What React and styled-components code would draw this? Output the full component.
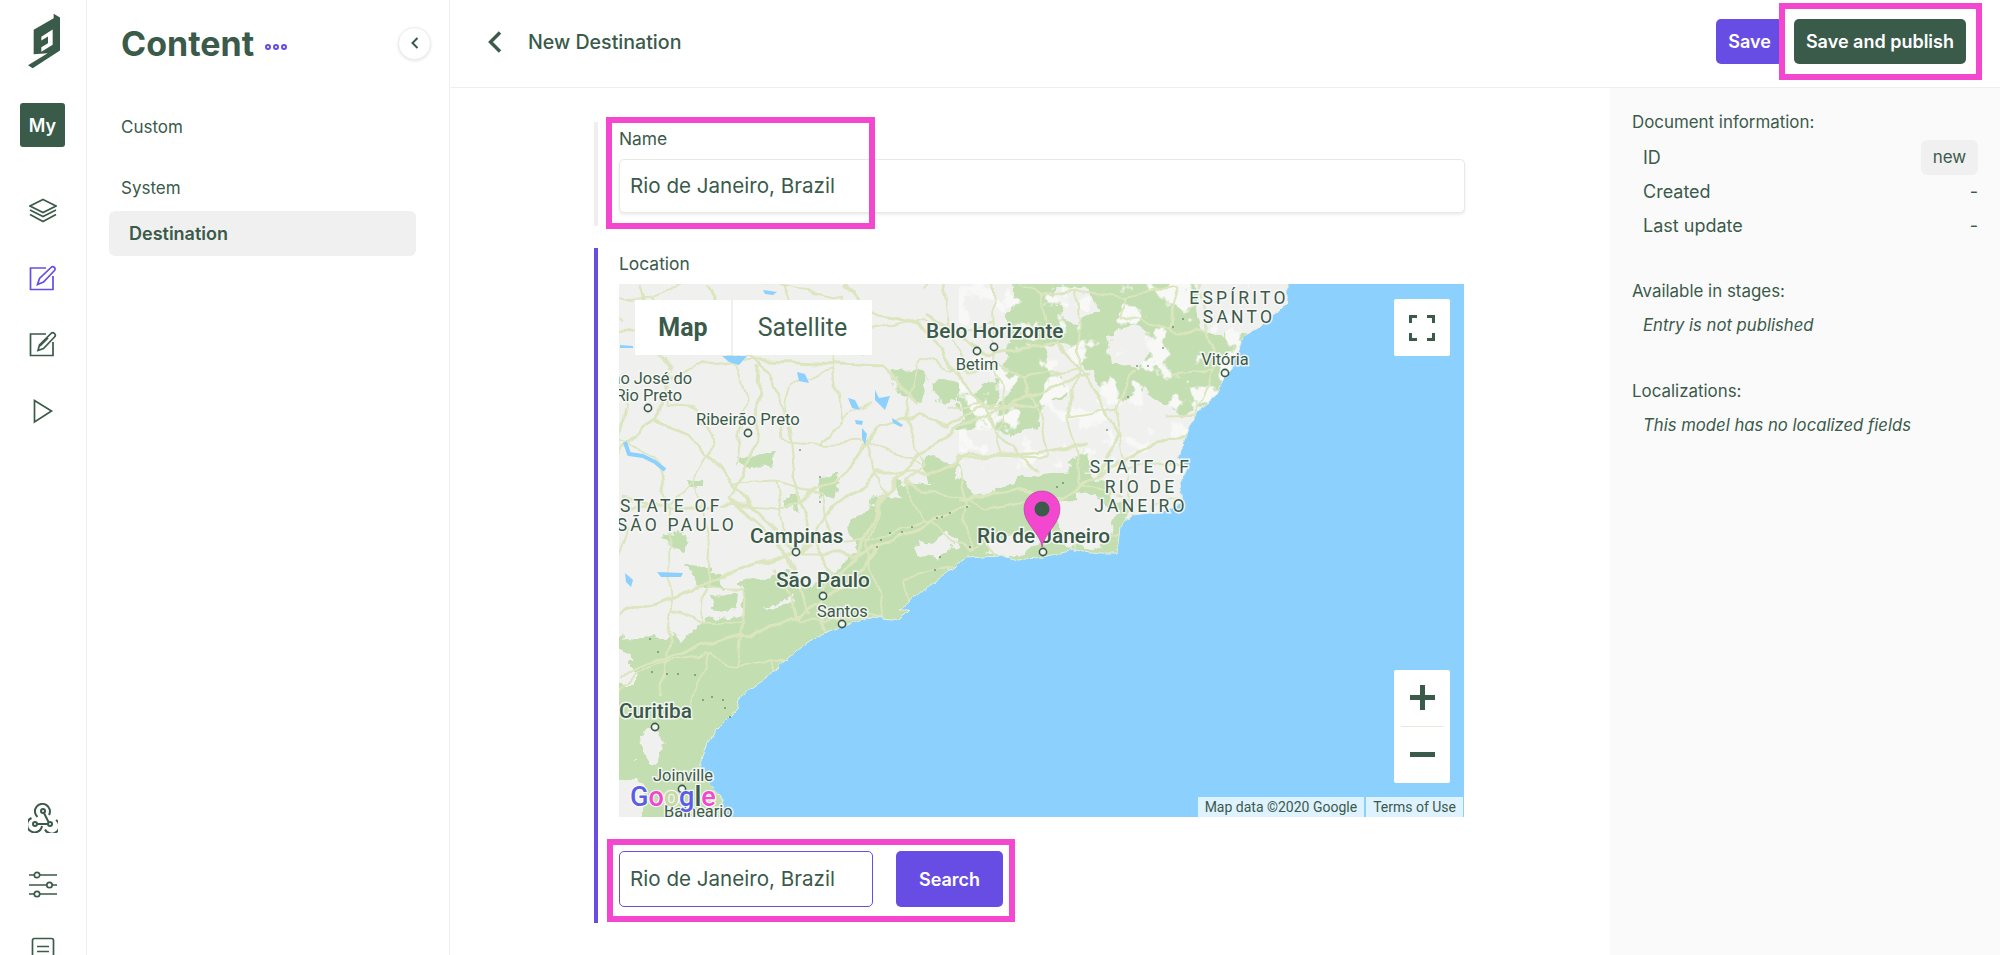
import React from "react";
import styled, { createGlobalStyle } from "styled-components";

const GREEN = "#3a5a4a";
const PURPLE = "#674de3";
const PINK = "#f347d0";
const LAND = "#f0f0ee";
const FOREST = "#c3deb0";
const SEA = "#8cd0fe";

const water = "668,-50 668,19 658,29 638,44 624,53 619,69 611,86 601,103 594,116 578,128 571,143 564,159 559,173 569,183 561,199 564,219 541,228 514,231 501,243 498,269 481,269 454,266 424,273 398,276 381,271 348,273 331,286 304,306 281,326 291,326 281,336 254,333 234,339 204,349 178,366 148,393 121,413 118,426 98,446 88,459 81,479 88,496 104,516 109,600 900,600 900,-50";

// forest areas, in map pixels
const forests = [
    "-40,359 14,353 38,356 68,359 84,339 114,336 138,329 168,323 188,306 224,286 264,246 304,229 338,219 371,213 404,193 451,186 464,169 481,203 508,229 500,275 300,345 180,400 110,600 -40,600",
    "564,-30 581,49 624,53 601,103 578,123 561,129 528,103 508,116 484,106 464,76 441,56 421,63 448,106 424,119 408,146 388,146 381,119 404,99 374,99 344,116 341,146 364,143 380,105 394,60 394,-30",
    "230,232 300,205 345,195 360,215 300,240 240,270",
    "120,300 170,290 190,305 130,330",
    "71,195 84,197 82,203 72,202",
    "121,173 156,171 150,181 128,180",
    "201,193 218,196 214,213 203,210",
    "168,216 178,216 176,223 168,222",
    "46,249 68,256 66,263 50,258",
    "68,283 101,288 100,303 76,300",
    "276,199 304,202 300,219 280,216",
    "304,176 338,180 334,199 310,196",
    "318,96 341,100 338,119 320,116",
    "278,86 304,92 300,116 282,110",
    "364,136 391,138 388,149 368,148",
    "408,136 421,138 419,146 410,145",
    "91,313 114,315 112,326 94,324"
];

// open ground cut back out of the forest
const clearings = [
    "440,10 470,6 478,24 455,40 444,30",
    "490,50 520,44 540,60 515,84 495,76",
    "-20,372 12,372 12,396 -20,396",
    "22,448 36,440 46,460 34,478 24,474",
    "-20,500 16,492 30,508 20,560 -20,560",
    "370,260 400,250 420,258 398,270 372,272",
    "436,220 474,214 496,232 480,262 446,256",
    "300,262 326,250 340,256 318,276"
];

const roads = [
    "20,0 34,50 52,84 36,130 0,170",
    "90,0 110,48 150,90 172,150 178,215 215,300",
    "225,0 250,30 300,40 330,80 360,120 380,150 420,190",
    "0,48 60,52 120,76 175,78 262,82 300,120",
    "140,84 135,170 110,215 170,270 190,330",
    "36,130 90,170 130,222 180,270 210,230 260,190 310,190 350,170 410,170 470,160",
    "0,215 60,225 108,222 160,225 225,190 260,140 300,130 330,145 360,125 420,120",
    "210,300 240,270 262,215 300,170 350,140 410,110 470,90",
    "0,330 60,310 110,290 170,270 240,270 290,250 350,220",
    "305,30 370,70 440,60 470,100 500,150 480,190 440,215 400,205 340,215",
    "480,190 520,165 570,150 590,120",
    "0,390 60,370 130,350 180,330 230,300 262,260"
];

// thin back roads on a jittered grid, so the inland does not stay empty
function backRoads() {
    let seed = 41;
    const rnd = () => {
        seed = (seed * 1103515245 + 12345) % 2147483648;
        return seed / 2147483648;
    };
    const step = 42;
    const points = [];
    for (let r = 0; r < 11; r++) {
        points.push([]);
        for (let c = 0; c < 15; c++) {
            points[r].push([c * step + rnd() * 30 - 15, r * step + rnd() * 30 - 15]);
        }
    }
    const lines = [];
    for (let r = 0; r < 11; r++) {
        for (let c = 0; c < 15; c++) {
            const p = points[r][c];
            if (c < 14 && rnd() < 0.62) lines.push([p, points[r][c + 1]]);
            if (r < 10 && rnd() < 0.62) lines.push([p, points[r + 1][c]]);
        }
    }
    return lines;
}

const lanes = backRoads();

const lakes = [
    "178,88 186,90 190,99 180,97",
    "229,114 236,116 241,126 233,124",
    "256,106 260,114 271,112 266,126 256,116",
    "236,136 244,137 243,141 237,140",
    "243,144 248,150 246,161 243,154",
    "273,134 284,141 282,143 274,139",
    "38,288 64,289 62,293 42,293",
    "6,289 14,296 12,303 7,298",
    "144,6 158,8 154,11 146,10",
    "103,72 128,72 120,81 110,78",
    "1,61 14,62 14,64 1,64"
];

const longLake = "6,158 10,170 24,172 36,178 46,186";

const borderDots = [
    [318, 234], [323, 233], [331, 229], [348, 223], [258, 263], [262, 256], [271, 249], [283, 248],
    [293, 243], [316, 286], [321, 273], [351, 263], [438, 203], [444, 199], [488, 146], [509, 113],
    [518, 82], [529, 82], [544, 64], [554, 43], [564, 35], [201, 193], [201, 218], [181, 166],
    [31, 355], [39, 368], [33, 388], [48, 390], [59, 390], [76, 391], [84, 416], [93, 413],
    [104, 416], [106, 424], [111, 433]
];

const rings = [[375, 63], [358, 67], [29, 124], [129, 149], [177, 268], [204, 312], [223, 340], [606, 89], [36, 443], [63, 505]];

export default function App() {
    return (
        <Page>
            <GlobalStyle />
            <Rail>
                <Logo viewBox="36 27 96 163">
                    <path fillRule="evenodd" d="M113 27 132 38V137L50 190 36 181 95 145 53 148V75L113 40ZM76 96 110 74V120L76 141V127L96 115V95L76 107Z" fill={GREEN} />
                </Logo>
                <Workspace>My</Workspace>
                <RailIcons>
                    <RailIcon>
                        <IconSvg viewBox="0 0 28 28">
                            <path d="M14 2.5 27 9 14 15.5 1 9Z" />
                            <path d="M1 13 14 19.5 27 13" />
                            <path d="M1 17.5 14 24.5 27 17.5" />
                        </IconSvg>
                    </RailIcon>
                    <RailIcon $active>
                        <IconSvg viewBox="0 0 28 28">
                            <path d="M17 4H1.5V25.5H24V12" />
                            <path d="M8.5 20.5 10.5 14.5 22 3.5A2.2 2.2 0 0 1 25.5 6.5L14.5 18Z" />
                        </IconSvg>
                    </RailIcon>
                    <RailIcon>
                        <IconSvg viewBox="0 0 28 28">
                            <path d="M17 4H1.5V25.5H24V12" />
                            <path d="M9 20.5 10.5 15 22 3.5A2.4 2.4 0 0 1 25.5 7L14.5 18.5Z" />
                            <path d="M11 16 19 8" />
                        </IconSvg>
                    </RailIcon>
                    <RailIcon>
                        <IconSvg viewBox="0 0 28 28">
                            <path d="M5.5 3.5V25L22.5 14Z" />
                        </IconSvg>
                    </RailIcon>
                </RailIcons>
                <RailBottom>
                    <RailIcon>
                        <IconSvg $wide viewBox="0 0 30 30">
                            <path d="M9.5 14A7.5 7.5 0 1 1 21 12" />
                            <path d="M3.5 15A7.5 7.5 0 1 0 14 23" />
                            <path d="M17 26.5A7.5 7.5 0 1 0 28 17" />
                            <circle cx="15" cy="8" r="2" />
                            <circle cx="7" cy="21" r="2" />
                            <circle cx="22" cy="21" r="2" />
                            <path d="M16 10 20.5 19M9 21H20" />
                        </IconSvg>
                    </RailIcon>
                    <RailIcon>
                        <IconSvg viewBox="0 0 28 28">
                            <path d="M0 4H28M0 14H28M0 23H28" />
                            <circle cx="8" cy="4" r="2.7" fill="#fff" />
                            <circle cx="20.5" cy="14" r="2.7" fill="#fff" />
                            <circle cx="8" cy="23" r="2.7" fill="#fff" />
                        </IconSvg>
                    </RailIcon>
                    <RailIcon>
                        <IconSvg viewBox="0 0 28 28">
                            <rect x="3.5" y="1.5" width="21" height="26" rx="2" />
                            <path d="M8 9.5H20M8 14.5H20" />
                        </IconSvg>
                    </RailIcon>
                </RailBottom>
            </Rail>

            <Sidebar>
                <TitleRow>
                    <Title>Content</Title>
                    <MoreDots>
                        <i /><i /><i />
                    </MoreDots>
                    <Collapse>
                        <svg width="12" height="14" viewBox="0 0 12 14">
                            <path d="M8.5 2 3.5 7 8.5 12" fill="none" stroke={GREEN} strokeWidth="2" />
                        </svg>
                    </Collapse>
                </TitleRow>
                <GroupLabel>Custom</GroupLabel>
                <GroupLabel $gap>System</GroupLabel>
                <SideItem>Destination</SideItem>
            </Sidebar>

            <Main>
                <Header>
                    <BackIcon width="16" height="24" viewBox="0 0 16 24">
                        <path d="M13 2.5 3.5 12 13 21.5" fill="none" stroke={GREEN} strokeWidth="3.4" />
                    </BackIcon>
                    <HeaderTitle>New Destination</HeaderTitle>
                    <Button $bg={PURPLE}>Save</Button>
                    <PublishWrap>
                        <PublishMark />
                        <Button $bg={GREEN} $wide>Save and publish</Button>
                    </PublishWrap>
                </Header>
                <Body>
                    <FormArea>
                        <Field>
                            <Mark $left={8} $top={-5} $width={269} $height={112} />
                            <FieldLabel>Name</FieldLabel>
                            <TextInput value="Rio de Janeiro, Brazil" readOnly />
                        </Field>
                        <Field $active>
                            <FieldLabel>Location</FieldLabel>
                            <MapBox>
                                <MapDrawing />
                                <MapTypes>
                                    <MapType $on>Map</MapType>
                                    <MapType>Satellite</MapType>
                                </MapTypes>
                                <FullScreen>
                                    <svg width="26" height="26" viewBox="0 0 26 26">
                                        <path d="M1.5 8V1.5H8M18 1.5H24.5V8M24.5 18V24.5H18M8 24.5H1.5V18" fill="none" stroke={GREEN} strokeWidth="3" />
                                    </svg>
                                </FullScreen>
                                <ZoomBox>
                                    <ZoomPlus />
                                    <ZoomLine />
                                    <ZoomMinus />
                                </ZoomBox>
                                <Attribution>
                                    <AttrCell>Map data ©2020 Google</AttrCell>
                                    <AttrCell>Terms of Use</AttrCell>
                                </Attribution>
                            </MapBox>
                            <SearchRow>
                                <Mark $left={-12} $top={-12} $width={408} $height={83} />
                                <SearchInput value="Rio de Janeiro, Brazil" readOnly />
                                <SearchButton>Search</SearchButton>
                            </SearchRow>
                        </Field>
                    </FormArea>
                    <Details>
                        <DetailsHead>Document information:</DetailsHead>
                        <InfoRows>
                            <InfoRow>ID<Chip>new</Chip></InfoRow>
                            <InfoRow>Created<span>-</span></InfoRow>
                            <InfoRow>Last update<span>-</span></InfoRow>
                        </InfoRows>
                        <DetailsHead $top={39}>Available in stages:</DetailsHead>
                        <DetailsNote>Entry is not published</DetailsNote>
                        <DetailsHead $top={46}>Localizations:</DetailsHead>
                        <DetailsNote>This model has no localized fields</DetailsNote>
                    </Details>
                </Body>
            </Main>
        </Page>
    );
}

function MapDrawing() {
    return (
        <MapSvg viewBox="0 0 845 533">
            <defs>
                <filter id="rough" x="-5%" y="-5%" width="110%" height="110%">
                    <feTurbulence type="fractalNoise" baseFrequency="0.05" numOctaves="4" seed="3" />
                    <feDisplacementMap in="SourceGraphic" scale="22" xChannelSelector="R" yChannelSelector="G" />
                </filter>
                <filter id="wiggle" x="-5%" y="-5%" width="110%" height="110%">
                    <feTurbulence type="fractalNoise" baseFrequency="0.04" numOctaves="2" seed="9" />
                    <feDisplacementMap in="SourceGraphic" scale="14" xChannelSelector="R" yChannelSelector="G" />
                </filter>
                <filter id="coast" x="-5%" y="-5%" width="110%" height="110%">
                    <feTurbulence type="fractalNoise" baseFrequency="0.09" numOctaves="3" seed="5" />
                    <feDisplacementMap in="SourceGraphic" scale="6" xChannelSelector="R" yChannelSelector="G" />
                </filter>
                <filter id="holes" x="0" y="0" width="100%" height="100%">
                    <feTurbulence type="fractalNoise" baseFrequency="0.04" numOctaves="4" seed="12" />
                    <feColorMatrix type="matrix" values="0 0 0 0 0.94  0 0 0 0 0.94  0 0 0 0 0.93  14 0 0 0 -7.9" />
                </filter>
            </defs>
            <rect width="845" height="533" fill={LAND} />
            <g filter="url(#rough)">
                {forests.map((p, i) => <polygon key={i} points={p} fill={FOREST} stroke={FOREST} strokeWidth="4" strokeLinejoin="round" />)}
                {clearings.map((p, i) => <polygon key={i} points={p} fill={LAND} stroke={LAND} strokeWidth="4" strokeLinejoin="round" />)}
            </g>
            <rect x="340" y="0" width="290" height="190" filter="url(#holes)" />
            <g filter="url(#wiggle)" fill="none" stroke="#dbe6bf" strokeLinejoin="round">
                {lanes.map(([a, b], i) => <line key={i} x1={a[0]} y1={a[1]} x2={b[0]} y2={b[1]} strokeWidth="2" />)}
                {roads.map((p, i) => <polyline key={i} points={p} strokeWidth="3" />)}
            </g>
            <g fill={SEA}>
                {lakes.map((p, i) => <polygon key={i} points={p} />)}
            </g>
            <polyline points={longLake} fill="none" stroke={SEA} strokeWidth="4" strokeLinejoin="round" />
            <polygon points={water} filter="url(#coast)" fill={SEA} stroke="#e8efdc" strokeWidth="1" strokeLinejoin="round" />
            {borderDots.map(([x, y], i) => <circle key={i} cx={x} cy={y} r="0.8" fill={GREEN} />)}

            <City x="307" y="54" $size={20.8} $bold>Belo Horizonte</City>
            <City x="358" y="86" $size={16.4} textAnchor="middle">Betim</City>
            <City x="73" y="100" $size={16.4} textAnchor="end">São José do</City>
            <City x="63" y="117" $size={16.4} textAnchor="end">Rio Preto</City>
            <City x="77" y="141" $size={16.6}>Ribeirão Preto</City>
            <Region x="1" y="228">STATE OF</Region>
            <Region x="118" y="247" textAnchor="end">SÃO PAULO</Region>
            <City x="131" y="259" $size={20.8} $bold>Campinas</City>
            <City x="157" y="303" $size={20.8} $bold>São Paulo</City>
            <City x="198" y="333" $size={16.4}>Santos</City>
            <City x="358" y="259" $size={20.8} $bold>Rio de Janeiro</City>
            <Region x="522" y="189" textAnchor="middle">STATE OF</Region>
            <Region x="522" y="209" textAnchor="middle">RIO DE</Region>
            <Region x="522" y="228" textAnchor="middle">JANEIRO</Region>
            <Region x="620" y="20" textAnchor="middle">ESPÍRITO</Region>
            <Region x="620" y="39" textAnchor="middle">SANTO</Region>
            <City x="606" y="81" $size={16.4} textAnchor="middle">Vitória</City>
            <City x="0" y="434" $size={20.8} $bold>Curitiba</City>
            <City x="34" y="497" $size={16.4}>Joinville</City>
            <City x="45" y="533" $size={16.4}>Balneário</City>

            {rings.map(([x, y], i) => <CityRing key={i} cx={x} cy={y} r="3.6" />)}
            <CityRing cx="424" cy="268" r="3.6" />
            <path d="M423 263C422 250 405 240 405 225A18 18 0 0 1 441 225C441 240 425 250 423 263Z" fill={PINK} stroke="#b03a9c" strokeWidth="0.6" />
            <circle cx="423" cy="225" r="7.5" fill={GREEN} />

            <GoogleMark x="11" y="522">
                <tspan fill="#5a5ee6">G</tspan>
                <tspan fill={PINK}>o</tspan>
                <tspan fill="#c8d8a8">o</tspan>
                <tspan fill="#5a5ee6">g</tspan>
                <tspan fill={GREEN}>l</tspan>
                <tspan fill={PINK}>e</tspan>
            </GoogleMark>
        </MapSvg>
    );
}

const GlobalStyle = createGlobalStyle`
    html, body {
        margin: 0;
        background: #fff;
    }

    * {
        box-sizing: border-box;
    }
`

const Page = styled.div`
    display: flex;
    width: 2000px;
    height: 955px;
    overflow: hidden;
    background: #fff;
    color: ${GREEN};
    font-family: Inter, "Liberation Sans", sans-serif;
    font-size: 16px;
`

const Rail = styled.nav`
    flex: 0 0 87px;
    display: flex;
    flex-direction: column;
    align-items: center;
    height: 955px;
    padding-top: 13px;
    border-right: 1px solid #efefef;
`

const Logo = styled.svg`
    flex: none;
    width: 32px;
    height: 56px;
    margin-left: 1px;
`

const Workspace = styled.div`
    flex: none;
    display: flex;
    align-items: center;
    justify-content: center;
    width: 45px;
    height: 44px;
    margin: 34px 1px 0 0;
    border-radius: 3px;
    background: ${GREEN};
    color: #fff;
    font-size: 18px;
    font-weight: 600;
`

const RailIcons = styled.div`
    flex: none;
    margin-top: 31px;
`

const RailBottom = styled.div`
    flex: none;
    margin-top: 341px;
`

const RailIcon = styled.div`
    display: flex;
    align-items: center;
    justify-content: center;
    width: 60px;
    height: 66.5px;
    color: ${props => props.$active ? PURPLE : GREEN};
`

const IconSvg = styled.svg`
    width: ${props => props.$wide ? "30px" : "28px"};
    height: ${props => props.$wide ? "30px" : "28px"};
    fill: none;
    stroke: currentColor;
    stroke-width: ${props => props.$wide ? 2 : 1.7};
`

const Sidebar = styled.aside`
    flex: 0 0 363px;
    height: 955px;
    border-right: 1px solid #efefef;
`

const TitleRow = styled.div`
    display: flex;
    align-items: center;
    height: 86px;
    padding: 0 18px 0 34px;
`

const Title = styled.h1`
    margin: 2px 0 0;
    font-size: 34px;
    font-weight: 700;
    line-height: 40px;
`

const MoreDots = styled.div`
    display: flex;
    gap: 2px;
    margin: 8px 0 0 11px;

    i {
        width: 6px;
        height: 6px;
        border: 2px solid ${PURPLE};
        border-radius: 50%;
    }
`

const Collapse = styled.button`
    display: flex;
    align-items: center;
    justify-content: center;
    width: 33px;
    height: 33px;
    margin-left: auto;
    padding: 0;
    border: 1px solid #eceee6;
    border-radius: 50%;
    background: #fff;
    box-shadow: 0 1px 3px rgba(58, 90, 74, 0.15);
`

const GroupLabel = styled.div`
    margin: ${props => props.$gap ? "41px" : "31px"} 0 0 34px;
    font-size: 17px;
    line-height: 20px;
`

const SideItem = styled.div`
    display: flex;
    align-items: center;
    width: 307px;
    height: 45px;
    margin: 13px 0 0 22px;
    padding-left: 20px;
    border-radius: 6px;
    background: #f0f0f0;
    font-size: 18px;
    font-weight: 600;
`

const Main = styled.div`
    flex: 1;
    min-width: 0;
    display: flex;
    flex-direction: column;
`

const Header = styled.header`
    flex: 0 0 88px;
    display: flex;
    align-items: center;
    padding: 0 34px 4px 37px;
    border-bottom: 1px solid #efefef;
`

const BackIcon = styled.svg`
    flex: none;
`

const HeaderTitle = styled.div`
    margin-left: 25px;
    font-size: 19.6px;
    font-weight: 500;
`

const Button = styled.button`
    position: relative;
    height: 45px;
    margin-left: ${props => props.$wide ? "0" : "auto"};
    padding: 0 12px;
    border: 0;
    border-radius: 5px;
    background: ${props => props.$bg};
    color: #fff;
    font-family: inherit;
    font-size: 18px;
    font-weight: 600;
`

const PublishWrap = styled.div`
    position: relative;
    margin-left: 11px;
`

const PublishMark = styled.div`
    position: absolute;
    inset: -16px -16px -16px -15px;
    border: 6px solid ${PINK};
    background: #fff;
`

const Mark = styled.div`
    position: absolute;
    left: ${props => props.$left}px;
    top: ${props => props.$top}px;
    width: ${props => props.$width}px;
    height: ${props => props.$height}px;
    border: 6px solid ${PINK};
    pointer-events: none;
`

const Body = styled.div`
    flex: 1;
    min-height: 0;
    display: flex;
`

const FormArea = styled.main`
    flex: 1;
    min-width: 0;
    padding: 34px 0 0 144px;
`

const Field = styled.section`
    position: relative;
    width: 871px;
    margin-bottom: 22px;
    padding: ${props => props.$active ? "6px" : "7px"} 0 ${props => props.$active ? "16px" : "13px"} 21px;
    border-left: 4px solid ${props => props.$active ? PURPLE : "#efefef"};
`

const FieldLabel = styled.div`
    margin-bottom: 10px;
    font-size: 17.4px;
    line-height: 20px;
`

const TextInput = styled.input`
    display: block;
    width: 846px;
    height: 54px;
    padding: 0 10px 2px;
    border: 1px solid #e8e9e0;
    border-radius: 5px;
    box-shadow: 0 2px 3px rgba(58, 90, 74, 0.1);
    outline: 0;
    color: ${GREEN};
    font-family: inherit;
    font-size: 20.6px;
`

const MapBox = styled.div`
    position: relative;
    width: 845px;
    height: 533px;
    overflow: hidden;
    font-family: Roboto, "Liberation Sans", sans-serif;
`

const MapSvg = styled.svg`
    display: block;
    width: 845px;
    height: 533px;
`

const City = styled.text`
    fill: ${GREEN};
    font-family: Roboto, sans-serif;
    font-size: ${props => props.$size}px;
    font-weight: ${props => props.$bold ? 500 : 400};
    paint-order: stroke;
    stroke: rgba(248, 248, 246, 0.9);
    stroke-width: 3px;
`

const Region = styled.text`
    fill: ${GREEN};
    font-family: Roboto, sans-serif;
    font-size: 17.5px;
    letter-spacing: 3.2px;
    paint-order: stroke;
    stroke: rgba(248, 248, 246, 0.9);
    stroke-width: 3px;
`

const CityRing = styled.circle`
    fill: #f4f4f2;
    stroke: ${GREEN};
    stroke-width: 1.6;
`

const GoogleMark = styled.text`
    font-family: Roboto, sans-serif;
    font-size: 27px;
    font-weight: 500;
    paint-order: stroke;
    stroke: rgba(255, 255, 255, 0.85);
    stroke-width: 2.5px;
`

const MapTypes = styled.div`
    position: absolute;
    left: 16px;
    top: 16px;
    display: flex;
    gap: 2px;
    height: 55px;
    background: #f0f0ee;
`

const MapType = styled.div`
    display: flex;
    align-items: center;
    justify-content: center;
    width: ${props => props.$on ? "96px" : "139px"};
    background: #fff;
    font-size: 25px;
    font-weight: ${props => props.$on ? 700 : 400};
`

const FullScreen = styled.div`
    position: absolute;
    right: 14px;
    top: 15px;
    display: flex;
    align-items: center;
    justify-content: center;
    width: 56px;
    height: 57px;
    border-radius: 2px;
    background: #fff;
`

const ZoomBox = styled.div`
    position: absolute;
    right: 14px;
    top: 386px;
    display: flex;
    flex-direction: column;
    align-items: center;
    width: 56px;
    height: 113px;
    border-radius: 2px;
    background: #fff;
`

const ZoomPlus = styled.div`
    width: 25px;
    height: 25px;
    margin-top: 15px;
    background:
        linear-gradient(${GREEN}, ${GREEN}) center / 100% 5px no-repeat,
        linear-gradient(${GREEN}, ${GREEN}) center / 5px 100% no-repeat;
`

const ZoomLine = styled.div`
    width: 42px;
    height: 1px;
    margin-top: 16px;
    background: #e6e8dc;
`

const ZoomMinus = styled.div`
    width: 25px;
    height: 5px;
    margin-top: 25px;
    background: ${GREEN};
`

const Attribution = styled.div`
    position: absolute;
    right: 1px;
    bottom: 0;
    display: flex;
    gap: 2px;
    height: 20px;
`

const AttrCell = styled.div`
    padding: 0 7px;
    background: rgba(255, 255, 255, 0.72);
    font-size: 14px;
    line-height: 21px;
`

const SearchRow = styled.div`
    position: relative;
    display: flex;
    gap: 23px;
    margin-top: 34px;
`

const SearchInput = styled.input`
    width: 254px;
    height: 56px;
    padding: 0 10px 2px;
    border: 1px solid ${PURPLE};
    border-radius: 5px;
    outline: 0;
    color: ${GREEN};
    font-family: inherit;
    font-size: 20.6px;
`

const SearchButton = styled.button`
    width: 107px;
    height: 56px;
    border: 0;
    border-radius: 5px;
    background: ${PURPLE};
    color: #fff;
    font-family: inherit;
    font-size: 18px;
    font-weight: 600;
`

const Details = styled.aside`
    flex: 0 0 390px;
    padding: 24px 22px 0;
    background: #fafafa;
`

const DetailsHead = styled.div`
    margin-top: ${props => props.$top || 0}px;
    font-size: 16.9px;
    line-height: 20px;
`

const InfoRows = styled.div`
    margin: 8px 0 0 11px;
`

const InfoRow = styled.div`
    display: flex;
    align-items: center;
    justify-content: space-between;
    height: 34px;
    font-size: 18px;
`

const Chip = styled.span`
    display: flex;
    align-items: center;
    justify-content: center;
    width: 57px;
    height: 35px;
    border-radius: 6px;
    background: #f0f0f0;
    font-size: 17px;
`

const DetailsNote = styled.div`
    margin: 14px 0 0 11px;
    font-size: 16.7px;
    font-style: italic;
    line-height: 20px;
`
